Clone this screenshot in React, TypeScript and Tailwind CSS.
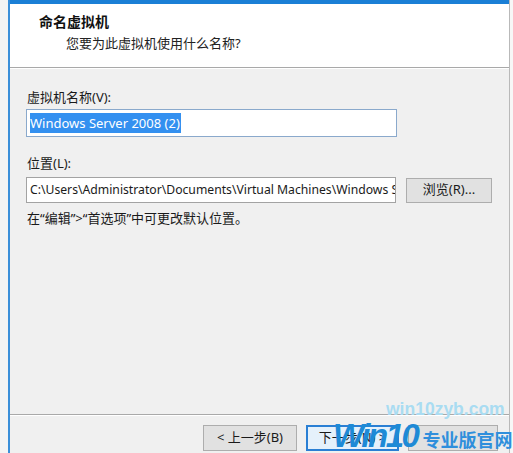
import React from 'react';

const ui = { fontFamily: '"Segoe UI", "Noto Sans", "Noto Sans CJK SC", sans-serif' };

export default function App() {
  return (
    <div className="relative flex h-[453px] w-[513px] overflow-hidden bg-[#f7f7f7]" style={ui}>
      <div className="w-[8px] shrink-0 bg-[#f4f4f4]" />
      <div className="flex flex-1 flex-col border-l-2 border-r border-l-[#3b8fd9] border-r-[#b9b9b9] bg-[#f0f0f0]">
        <div className="h-[4px] bg-[#1a7fd6]" />
        {/* header */}
        <div className="h-[64px] border-b border-[#a9a9a9] bg-white pl-[29px] pt-[9px]">
          <div className="text-[14px] font-bold leading-[18px] text-[#111]">命名虚拟机</div>
          <div className="mt-[3px] pl-[27px] text-[13px] leading-[18px] text-[#222]">您要为此虚拟机使用什么名称?</div>
        </div>
        <div className="h-px bg-white" />
        {/* body */}
        <div className="flex flex-1 flex-col pl-[16px] pr-[12px] pt-[19px] text-[13px] text-[#1a1a1a]">
          <div className="pl-[1px] leading-[18px]">虚拟机名称(V):</div>
          <div className="mt-[3px] flex h-[28px] w-[371px] items-center border border-[#8aa9cc] bg-white pl-[3px]">
            <span className="bg-[#3390f0] pr-[1px] text-[13px] leading-[20px] text-white">Windows Server 2008 (2)</span>
          </div>
          <div className="mt-[17px] pl-[1px] leading-[18px]">位置(L):</div>
          <div className="mt-[5px] flex items-center gap-[10px]">
            <div className="flex h-[26px] w-[370px] items-center overflow-hidden whitespace-nowrap border border-[#a3a3a3] bg-white pl-[3px] text-[12.2px]">
              C:\Users\Administrator\Documents\Virtual Machines\Windows Server 2008 (2)
            </div>
            <div className="flex h-[25px] w-[86px] items-center justify-center border border-[#adadad] bg-[#e1e1e1] text-[13px]">浏览(R)...</div>
          </div>
          <div className="mt-[6px] pl-[1px] leading-[18px]">在“编辑”&gt;“首选项”中可更改默认位置。</div>
          <div className="flex-1" />
        </div>
        {/* footer */}
        <div className="h-px bg-[#a9a9a9]" />
        <div className="h-px bg-white" />
        <div className="flex h-[37px] gap-[9px] pl-[193px] pt-[9px] text-[13px] text-[#1a1a1a]">
          <div className="flex h-[26px] w-[94px] items-center justify-center border border-[#adadad] bg-[#e1e1e1]">&lt; 上一步(B)</div>
          <div className="flex h-[26px] w-[93px] items-center justify-center border-2 border-[#2a7fd4] bg-[#e5f1fb]">下一步(N) &gt;</div>
          <div className="flex h-[26px] w-[90px] items-center justify-center border border-[#adadad] bg-[#e1e1e1] text-[#e1e1e1]">取消</div>
        </div>
      </div>
      <div className="w-[3px] shrink-0 bg-[#f7f7f7]" />
      {/* watermark */}
      <div className="pointer-events-none absolute left-[386px] top-[399px] whitespace-nowrap text-[17.5px] font-bold leading-[20px] text-[#a9dcf2]" style={{ fontFamily: '"Liberation Sans", sans-serif' }}>
        win10zyb.com
      </div>
      <div className="pointer-events-none absolute left-[333px] top-[419px] flex items-end gap-[5px] whitespace-nowrap">
        <span className="text-[33px] font-bold italic leading-[34px] tracking-[-2.5px] text-[#1e8ad6]" style={{ fontFamily: '"Liberation Sans", sans-serif' }}>Win10</span>
        <span className="pb-[3px] text-[18px] font-bold leading-[22px] text-[#2f8fdc]" style={{ fontFamily: '"Noto Sans CJK SC", sans-serif' }}>专业版官网</span>
      </div>
    </div>
  );
}
